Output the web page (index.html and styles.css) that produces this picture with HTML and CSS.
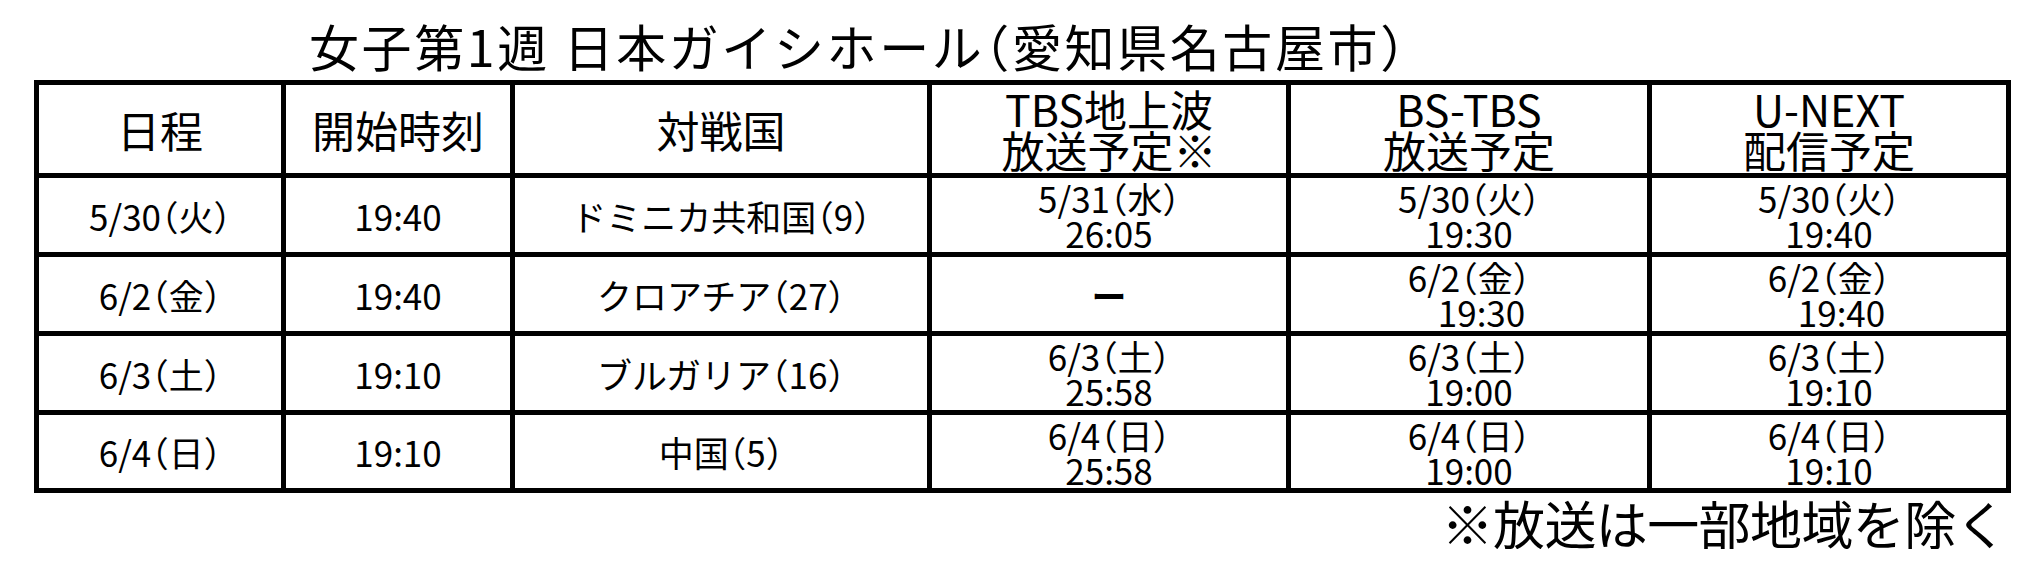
FILE: index.html
```html
<!DOCTYPE html>
<html lang="ja">
<head>
<meta charset="utf-8">
<title>女子第1週 日本ガイシホール</title>
<link rel="stylesheet" href="styles.css">
</head>
<body>
<div class="page">
  <h1 class="title">女子第1週 日本ガイシホール（愛知県名古屋市）</h1>
  <div class="schedule">
    <div class="cell head"><span>日程</span></div>
    <div class="cell head"><span>開始時刻</span></div>
    <div class="cell head"><span>対戦国</span></div>
    <div class="cell head"><span>TBS地上波</span><span>放送予定※</span></div>
    <div class="cell head"><span>BS-TBS</span><span>放送予定</span></div>
    <div class="cell head"><span>U-NEXT</span><span>配信予定</span></div>

    <div class="cell"><span>5/30（火）</span></div>
    <div class="cell"><span>19:40</span></div>
    <div class="cell"><span>ドミニカ共和国（9）</span></div>
    <div class="cell"><span>5/31（水）</span><span>26:05</span></div>
    <div class="cell"><span>5/30（火）</span><span>19:30</span></div>
    <div class="cell"><span>5/30（火）</span><span>19:40</span></div>

    <div class="cell"><span>6/2（金）</span></div>
    <div class="cell"><span>19:40</span></div>
    <div class="cell"><span>クロアチア（27）</span></div>
    <div class="cell"><span class="dash">ー</span></div>
    <div class="cell"><span>6/2（金）</span><span class="shift">19:30</span></div>
    <div class="cell"><span>6/2（金）</span><span class="shift">19:40</span></div>

    <div class="cell"><span>6/3（土）</span></div>
    <div class="cell"><span>19:10</span></div>
    <div class="cell"><span>ブルガリア（16）</span></div>
    <div class="cell"><span>6/3（土）</span><span>25:58</span></div>
    <div class="cell"><span>6/3（土）</span><span>19:00</span></div>
    <div class="cell"><span>6/3（土）</span><span>19:10</span></div>

    <div class="cell"><span>6/4（日）</span></div>
    <div class="cell"><span>19:10</span></div>
    <div class="cell"><span>中国（5）</span></div>
    <div class="cell"><span>6/4（日）</span><span>25:58</span></div>
    <div class="cell"><span>6/4（日）</span><span>19:00</span></div>
    <div class="cell"><span>6/4（日）</span><span>19:10</span></div>
  </div>
  <p class="note">※放送は一部地域を除く</p>
</div>
</body>
</html>
```

FILE: styles.css
```css
html, body {
  margin: 0;
  padding: 0;
  background: #ffffff;
}

body {
  font-family: "Noto Sans CJK JP", "Noto Sans", sans-serif;
  color: #000000;
  font-feature-settings: "halt";
}

.page {
  padding-left: 34px;
  width: 1977px;
}

.title {
  margin: 20px 0 10px 275px;
  font-size: 50px;
  line-height: 50px;
  font-weight: 400;
  letter-spacing: 2.6px;
  white-space: nowrap;
}

.schedule {
  display: grid;
  grid-template-columns: 242px 224px 412px 354px 356px 354px;
  grid-template-rows: 88px 74px 74px 74px 73px;
  gap: 5px;
  padding: 5px;
  background: #000000;
}

.cell {
  background: #ffffff;
  display: flex;
  flex-direction: column;
  align-items: center;
  justify-content: center;
  text-align: center;
  font-size: 35px;
  line-height: 35px;
  white-space: nowrap;
}

.head {
  font-size: 43px;
  line-height: 41px;
}

.shift {
  padding-left: 25px;
}

.dash {
  font-weight: 700;
}

.note {
  margin: 4px 0 0 0;
  padding-right: 4px;
  text-align: right;
  font-size: 52px;
  line-height: 52px;
  letter-spacing: -0.6px;
  white-space: nowrap;
}
```
